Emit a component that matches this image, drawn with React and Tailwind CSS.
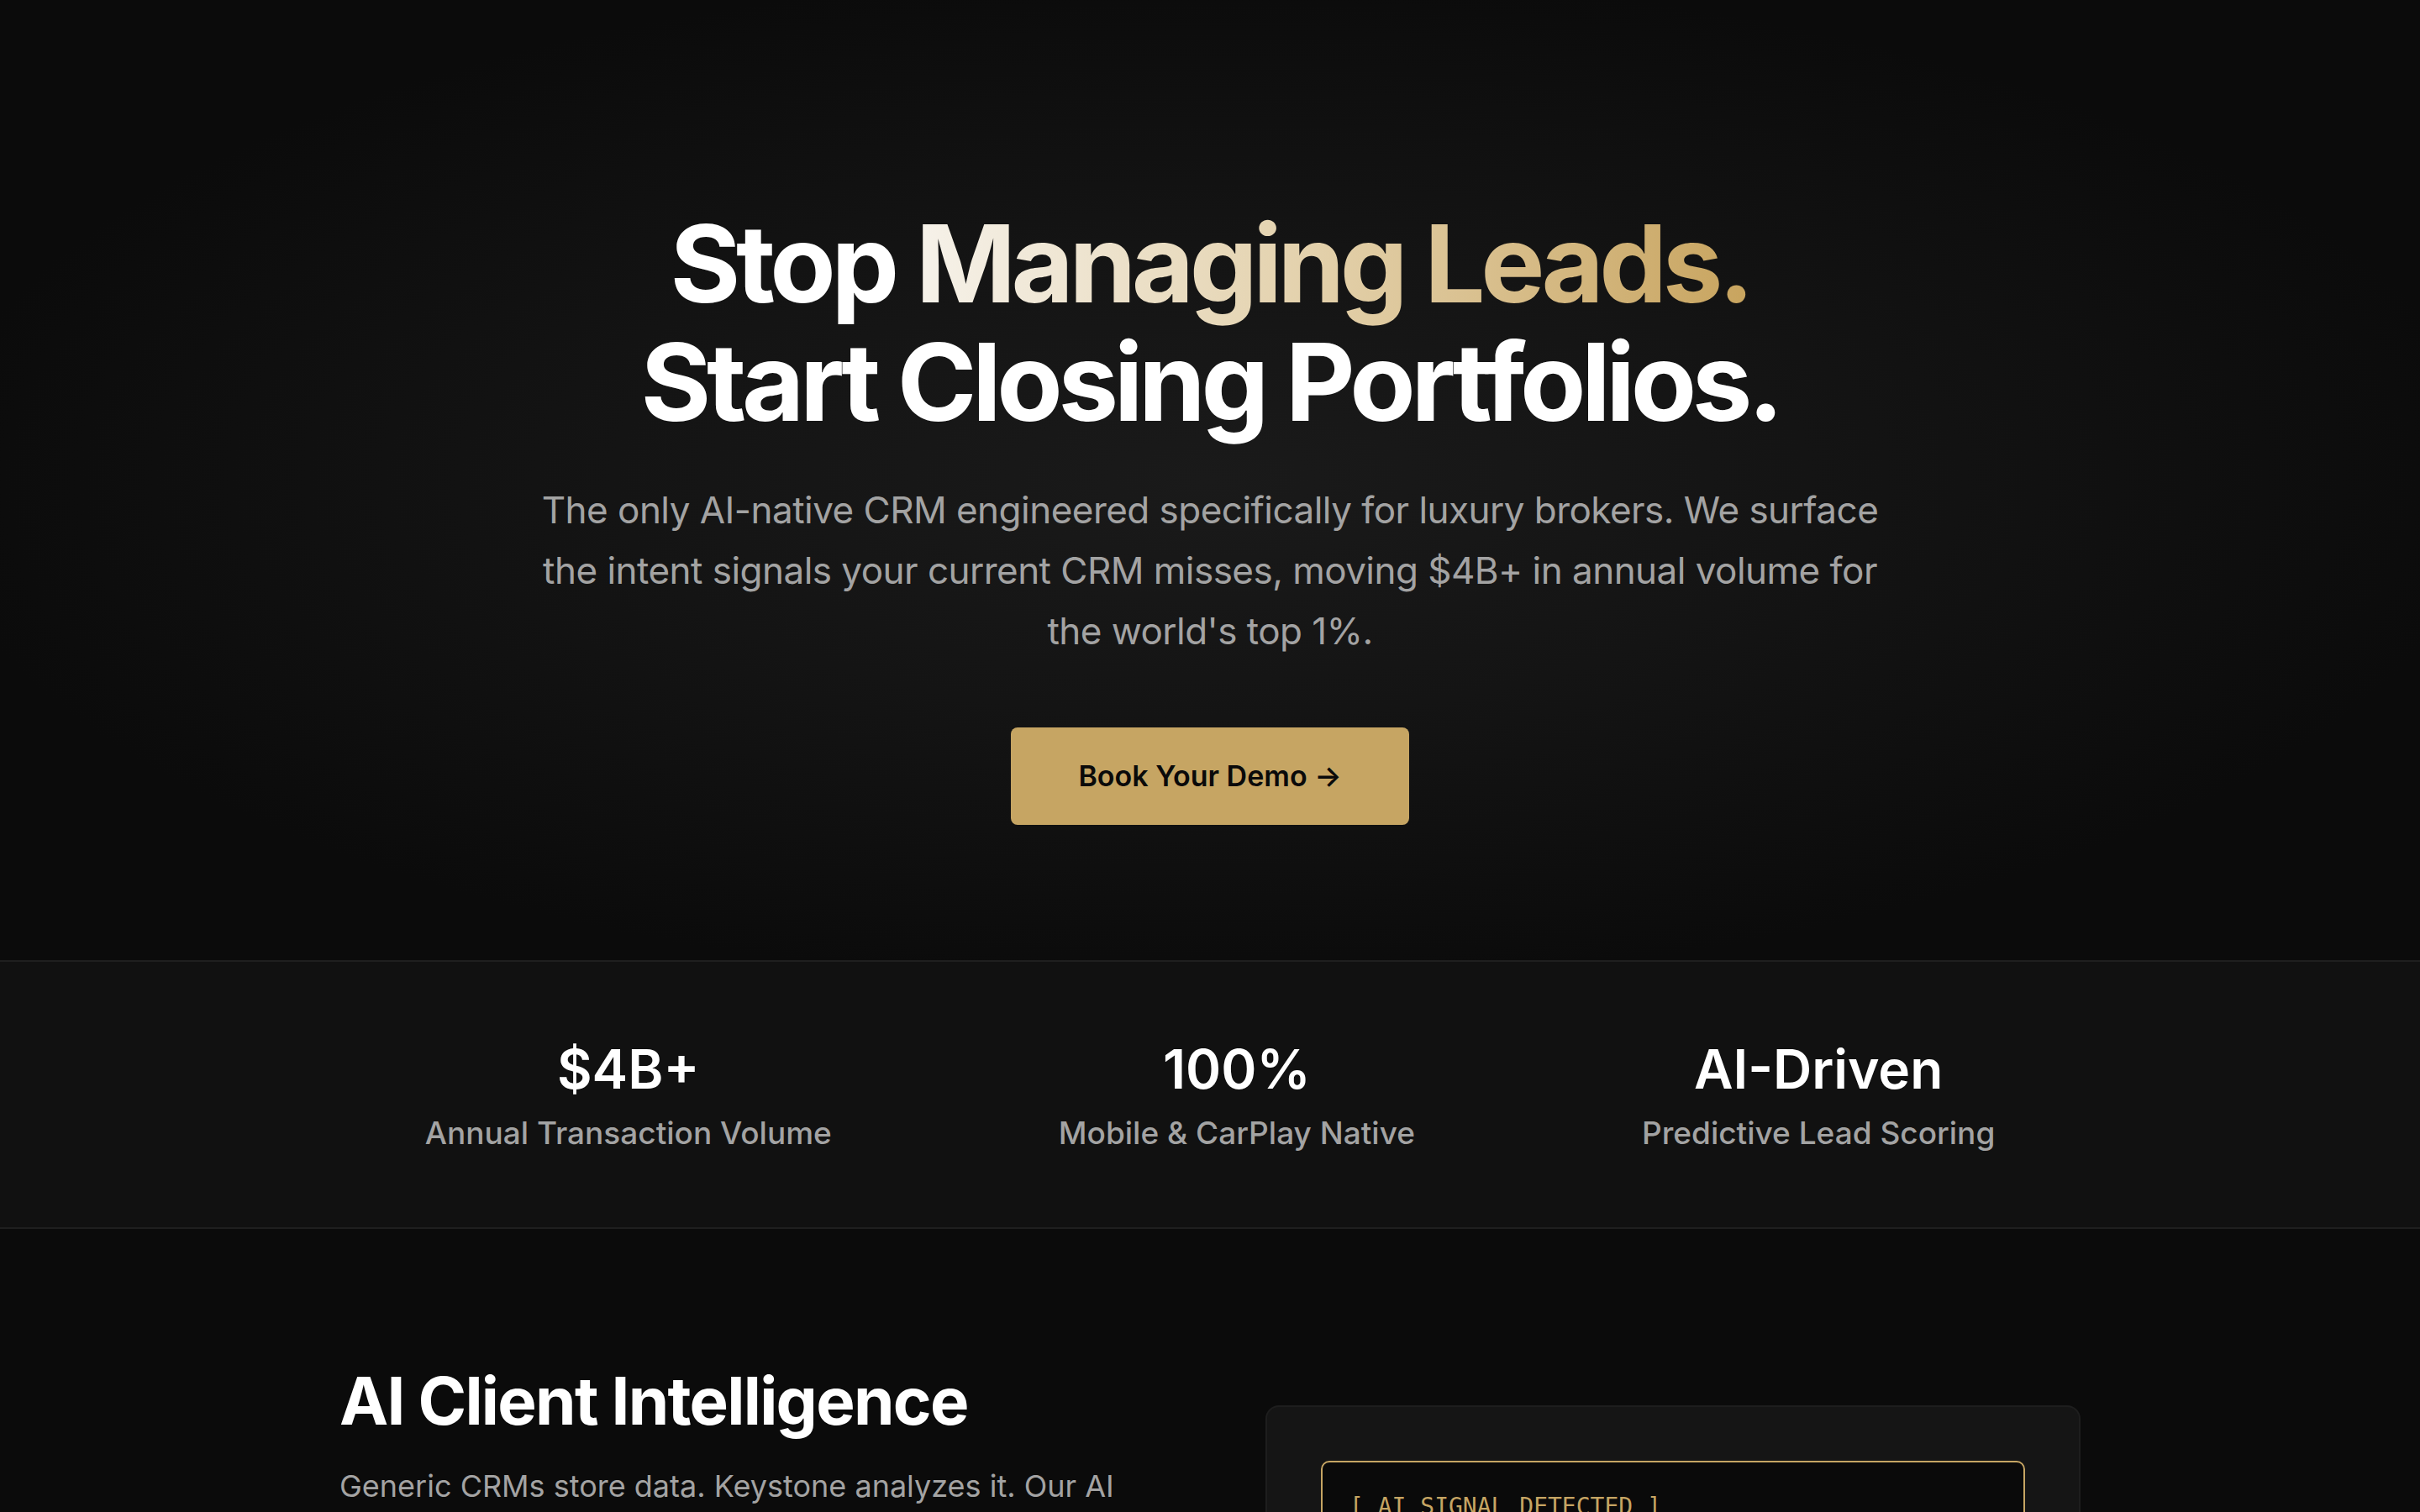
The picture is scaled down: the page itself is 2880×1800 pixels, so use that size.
import React from 'react'

const stats = [
  { value: '$4B+', label: 'Annual Transaction Volume' },
  { value: '100%', label: 'Mobile & CarPlay Native' },
  { value: 'AI-Driven', label: 'Predictive Lead Scoring' },
]

const App = () => {
  return (
    <div className="min-h-screen bg-[#0b0b0b] text-white font-['Inter','Liberation_Sans',sans-serif] antialiased">
      {/* Hero */}
      <section className="bg-[radial-gradient(ellipse_at_center,#1a1a1a_0%,#141414_35%,#0b0b0b_75%)] pt-[244px] pb-[161px] flex flex-col items-center text-center">
        <h1 className="text-[128px] leading-[1.1] font-bold tracking-[-0.042em]">
          Stop{' '}
          <span className="bg-gradient-to-r from-[#f6f2ea] via-[#e2cfa8] to-[#c8a45e] bg-clip-text text-transparent">
            Managing Leads.
          </span>
          <br />
          Start Closing Portfolios.
        </h1>
        <p className="mt-[45px] max-w-[1620px] text-[44px] leading-[72px] tracking-[-0.012em] text-[#a3a3a3]">
          The only AI-native CRM engineered specifically for luxury brokers. We surface the intent signals your current CRM misses, moving $4B+ in annual volume for the world's top 1%.
        </p>
        <button className="mt-[79px] h-[116px] px-[80px] flex items-center rounded-[8px] bg-[#c6a563] text-[#0a0a0a] text-[34px] font-semibold">
          Book Your Demo →
        </button>
      </section>

      {/* Stats band */}
      <section className="bg-[#111111] border-y-2 border-[#1f1f1f] pt-[90px] pb-[84px]">
        <div className="flex justify-center gap-[270px]">
          {stats.map((s) => (
            <div key={s.label} className="flex flex-col items-center">
              <div className="text-[64px] leading-[1.2] font-semibold">{s.value}</div>
              <div className="mt-[10px] text-[37px] leading-[1.5] font-medium text-[#a3a3a3]">{s.label}</div>
            </div>
          ))}
        </div>
      </section>

      {/* AI Client Intelligence */}
      <section className="bg-[#0b0b0b] pt-[158px] pb-[160px]">
        <div className="max-w-[2072px] mx-auto grid grid-cols-2 gap-[132px] items-start">
          <div>
            <h2 className="text-[78px] leading-[1.2] font-bold tracking-[-0.022em]">AI Client Intelligence</h2>
            <p className="mt-[26px] text-[36px] leading-[1.625] text-[#a3a3a3]">
              Generic CRMs store data. Keystone analyzes it. Our AI monitors every touchpoint, from open houses to private showings, and flags buyers the moment their intent shifts.
            </p>
          </div>
          <div className="mt-[52px] rounded-[16px] bg-[#151515] border-2 border-[#1e1e1e] p-[64px]">
            <div className="rounded-[10px] border-2 border-[#c6a563] bg-[#0a0a0a] px-[32px] py-[32px]">
              <div className="font-['DejaVu_Sans_Mono','Liberation_Mono',monospace] text-[28px] leading-[1.5] text-[#c6a563]">
                [ AI SIGNAL DETECTED ]
              </div>
              <div className="mt-[20px] font-['DejaVu_Sans_Mono','Liberation_Mono',monospace] text-[28px] leading-[1.6] text-[#a3a3a3]">
                Client: J. Whitmore<br />
                Signal: Repeat views — 3 listings<br />
                Intent score: 94 / 100
              </div>
            </div>
          </div>
        </div>
      </section>
    </div>
  )
}

export default App
